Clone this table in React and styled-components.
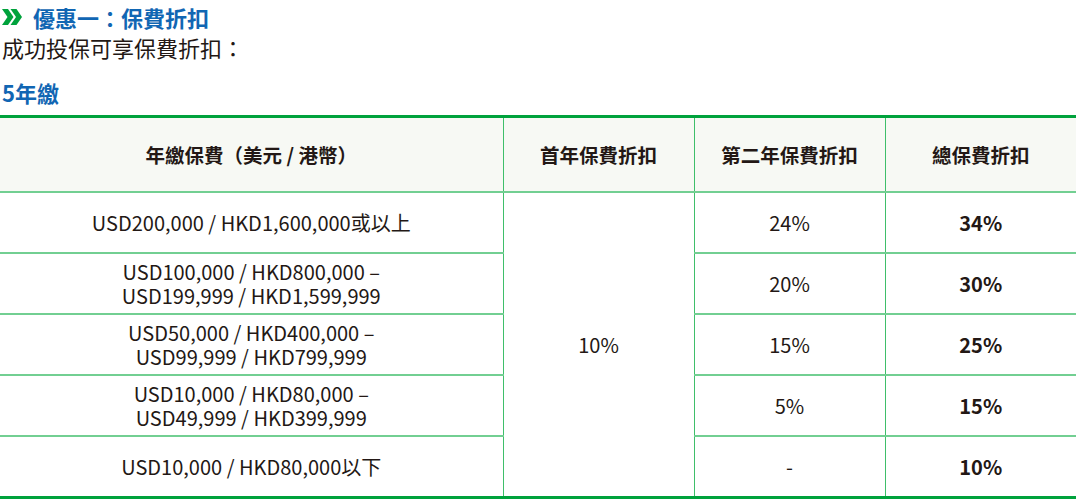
import React from 'react';
import styled, { createGlobalStyle } from 'styled-components';

const GlobalStyle = createGlobalStyle`
  body {
    margin: 0;
    background: #ffffff;
    font-family: "Noto Sans CJK TC", "Noto Sans", sans-serif;
    color: #231815;
  }
`;

const Page = styled.div`
  width: 1080px;
  padding-top: 2px;
`;

const Title = styled.h3`
  display: flex;
  align-items: center;
  gap: 11px;
  margin: 0 0 0 2px;
  font-size: 22px;
  line-height: 30px;
  font-weight: 700;
  color: #1166b3;
`;

const Intro = styled.p`
  margin: 0 0 0 2px;
  font-size: 22px;
  line-height: 30px;
  color: #231815;
`;

const PlanLabel = styled.h4`
  margin: 15px 0 0 2px;
  font-size: 22px;
  line-height: 30px;
  font-weight: 700;
  color: #1166b3;
`;

const Table = styled.table`
  width: 1076px;
  margin-top: 8px;
  border-collapse: collapse;
  table-layout: fixed;
  border-top: 3px solid #00a23c;
  border-bottom: 3px solid #00a23c;
`;

const HeadCell = styled.th`
  height: 73px;
  padding: 0 8px;
  background: #f7f9f4;
  font-size: 19.5px;
  font-weight: 700;
  color: #231815;
  text-align: center;
  border-bottom: 2px solid #72cf92;
  border-left: ${p => (p.$first ? 'none' : '1px solid #3fbf6a')};
`;

const Cell = styled.td`
  height: ${p => (p.$last ? '57px' : '59px')};
  padding: 0 8px;
  font-size: 20px;
  line-height: 24px;
  font-weight: ${p => (p.$bold ? 700 : 400)};
  text-align: center;
  vertical-align: middle;
  border-top: 2px solid #72cf92;
  border-left: ${p => (p.$first ? 'none' : '1px solid #3fbf6a')};
`;

const Chevrons = () => (
  <svg width="20" height="18" viewBox="0 0 20 18">
    <path d="M0 1 L6 1 L11.5 9 L6 17 L0 17 L5.5 9 Z" fill="#00a23c" />
    <path d="M8.5 1 L14.5 1 L20 9 L14.5 17 L8.5 17 L14 9 Z" fill="#00a23c" />
  </svg>
);

const rows = [
  { range: ['USD200,000 / HKD1,600,000或以上'], second: '24%', total: '34%' },
  { range: ['USD100,000 / HKD800,000 –', 'USD199,999 / HKD1,599,999'], second: '20%', total: '30%' },
  { range: ['USD50,000 / HKD400,000 –', 'USD99,999 / HKD799,999'], second: '15%', total: '25%' },
  { range: ['USD10,000 / HKD80,000 –', 'USD49,999 / HKD399,999'], second: '5%', total: '15%' },
  { range: ['USD10,000 / HKD80,000以下'], second: '-', total: '10%' },
];

export default function App() {
  return (
    <Page>
      <GlobalStyle />
      <Title>
        <Chevrons />
        優惠一：保費折扣
      </Title>
      <Intro>成功投保可享保費折扣：</Intro>
      <PlanLabel>5年繳</PlanLabel>
      <Table>
        <colgroup>
          <col style={{ width: '503px' }} />
          <col style={{ width: '191px' }} />
          <col style={{ width: '191px' }} />
          <col style={{ width: '191px' }} />
        </colgroup>
        <thead>
          <tr>
            <HeadCell $first>年繳保費（美元 / 港幣）</HeadCell>
            <HeadCell>首年保費折扣</HeadCell>
            <HeadCell>第二年保費折扣</HeadCell>
            <HeadCell>總保費折扣</HeadCell>
          </tr>
        </thead>
        <tbody>
          {rows.map((r, i) => (
            <tr key={i}>
              <Cell $first $last={i === rows.length - 1}>
                {r.range.map((line, j) => (
                  <div key={j}>{line}</div>
                ))}
              </Cell>
              {i === 0 && <Cell rowSpan={rows.length}>10%</Cell>}
              <Cell>{r.second}</Cell>
              <Cell $bold>{r.total}</Cell>
            </tr>
          ))}
        </tbody>
      </Table>
    </Page>
  );
}
